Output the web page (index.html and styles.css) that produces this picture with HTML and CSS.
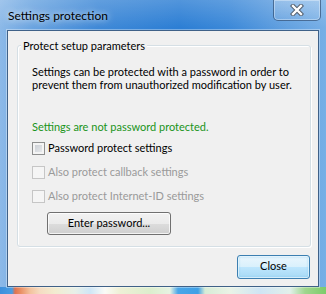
FILE: index.html
```html
<!DOCTYPE html>
<html>
<head>
<meta charset="utf-8">
<title>Settings protection</title>
<link rel="stylesheet" href="styles.css">
</head>
<body>
<div class="window">
  <div class="titlebar">
    <span class="title">Settings protection</span>
    <div class="close-x">
      <svg width="14" height="12" viewBox="0 0 14 12">
        <path d="M3 2 L11 10 M11 2 L3 10" stroke="#55606e" stroke-width="4.4" stroke-linecap="square" fill="none"/>
        <path d="M3 2 L11 10 M11 2 L3 10" stroke="#ffffff" stroke-width="2.3" stroke-linecap="square" fill="none"/>
      </svg>
    </div>
  </div>
  <div class="client">
    <div class="group">
      <div class="legend">Protect setup parameters</div>
      <p class="desc">Settings can be protected with a password in order to<br>prevent them from unauthorized modification by user.</p>
      <p class="status">Settings are not password protected.</p>
      <div class="check first"><span class="box"></span><span>Password protect settings</span></div>
      <div class="check disabled"><span class="box"></span><span>Also protect callback settings</span></div>
      <div class="check disabled"><span class="box"></span><span>Also protect Internet-ID settings</span></div>
      <div class="btn enter">Enter password...</div>
    </div>
    <div class="footer">
      <div class="btn default">Close</div>
    </div>
  </div>
</div>
</body>
</html>
```
FILE: styles.css
```css
* { box-sizing: border-box; }
html, body { margin: 0; padding: 0; }
body {
  width: 326px;
  height: 294px;
  overflow: hidden;
  font-family: "Lato", "Liberation Sans", sans-serif;
  font-size: 11px;
  line-height: 13px;
  color: #000;
}
.window {
  width: 326px;
  height: 294px;
  display: flex;
  flex-direction: column;
  background:
    linear-gradient(90deg, #3d8fdc 0, #4a9de2 12px, #e0734f 15px, #e98c61 20px, #f3c29d 30px, #f5dcc2 40px, #f2ecd0 55px, #e8f0e8 75px, #cfe6f6 90px, #fafaf6 105px, #eef0d6 120px, #dceecd 150px, #e6f3e2 170px, #49a6e8 178px, #3fa0e6 198px, #d7ecd6 205px, #eaf3e6 230px, #cfe5f4 260px, #e2f0ea 290px, #9fd68e 305px, #7ccc6a 326px) left bottom / 100% 7px no-repeat,
    linear-gradient(180deg, rgba(255,255,255,.18), rgba(255,255,255,0) 28px),
    linear-gradient(90deg, #8cb9e8 0, #6aa4e0 10%, #3f89d7 30%, #2c7ed4 55%, #3b88d8 70%, #5d9ddf 85%, #77afe6 100%);
}
.titlebar {
  height: 30px;
  display: flex;
  align-items: flex-start;
}
.title {
  padding: 8px 0 0 8px;
  font-size: 12px;
  line-height: 15px;
  color: #000;
  text-shadow: 0 0 6px rgba(255,255,255,.7), 0 0 10px rgba(255,255,255,.5);
}
.close-x {
  margin-left: auto;
  margin-right: 5px;
  width: 48px;
  height: 21px;
  border: 1px solid rgba(25,55,95,.6);
  border-top: 0;
  border-radius: 0 0 5px 5px;
  background: linear-gradient(rgba(255,255,255,.22), rgba(255,255,255,.08));
  box-shadow: inset 0 0 0 1px rgba(255,255,255,.35);
  display: flex;
  align-items: center;
  justify-content: center;
}
.client {
  margin-left: 7px;
  width: 312px;
  height: 257px;
  border: 1px solid #3f6188;
  box-shadow: 0 0 0 1px rgba(255,255,255,.35);
  background: #f0f0f0;
  padding: 14px 7px 0 9px;
  display: flex;
  flex-direction: column;
}
.group {
  height: 202px;
  border: 1px solid #d5dfe5;
  border-radius: 3px;
  box-shadow: inset 1px 1px 0 #fff, 1px 1px 0 #fff;
  padding: 0 0 0 14px;
  display: flex;
  flex-direction: column;
  align-items: flex-start;
}
.legend {
  margin: -7px 0 0 -11px;
  padding: 0 2px;
  background: #f0f0f0;
  white-space: nowrap;
}
.desc {
  margin: 13px 0 0;
  white-space: nowrap;
}
.status {
  margin: 29px 0 0;
  color: #1a941a;
  white-space: nowrap;
}
.check {
  display: flex;
  align-items: flex-start;
  margin-top: 10px;
  white-space: nowrap;
}
.check.first { margin-top: 8px; }
.box {
  width: 13px;
  height: 13px;
  margin: 1px 3px 0 0;
  border: 1px solid #8e8f8f;
  background: linear-gradient(135deg, #c6cad0, #eceef0);
  box-shadow: inset 0 0 0 2px #f4f4f4;
}
.check.disabled { color: #9a9a9a; }
.check.disabled .box {
  border-color: #c6c6c6;
  background: #f5f5f5;
  box-shadow: none;
}
.btn {
  height: 23px;
  border: 1px solid #707070;
  border-radius: 3px;
  background: linear-gradient(#f2f2f2 0, #ebebeb 50%, #dddddd 50%, #cfcfcf 100%);
  box-shadow: inset 0 0 0 1px rgba(255,255,255,.75);
  line-height: 19px;
  text-align: center;
  white-space: nowrap;
}
.enter {
  width: 124px;
  margin: 9px 0 0 15px;
}
.footer {
  display: flex;
  justify-content: flex-end;
  margin-top: 8px;
  padding-right: 1px;
}
.btn.default {
  width: 73px;
  height: 24px;
  border-color: #3c7fb1;
  background: linear-gradient(#eaf6fd 0, #d9f0fc 50%, #bee6fd 50%, #a7d9f5 100%);
  box-shadow: inset 0 0 0 1px rgba(255,255,255,.6), inset 0 0 2px 1px rgba(120,200,240,.6);
}
```
